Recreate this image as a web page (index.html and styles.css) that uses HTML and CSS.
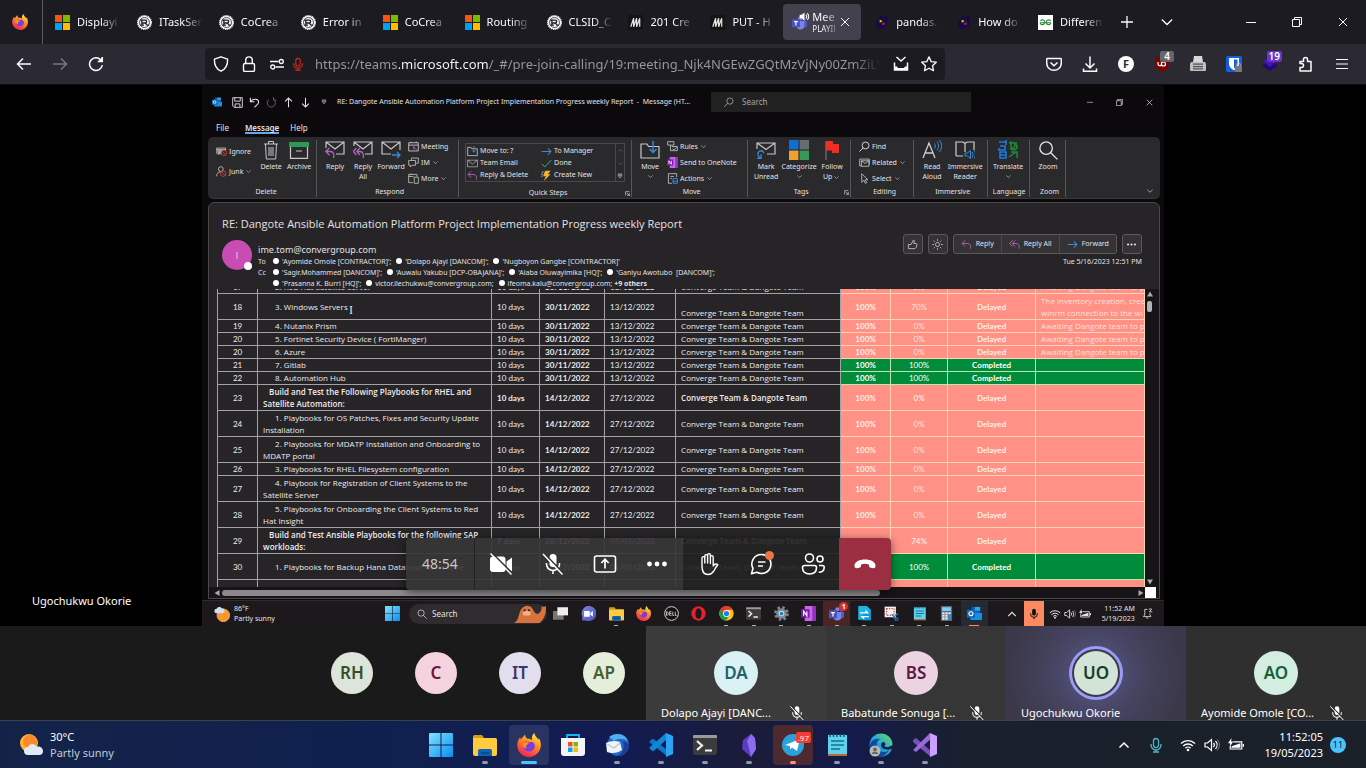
FILE: index.html
```html
<!DOCTYPE html>
<html lang="en">
<head>
<meta charset="utf-8">
<title>Meeting</title>
<link rel="stylesheet" href="styles.css">
</head>
<body>
<svg class="sprite" aria-hidden="true">
  <defs>
    <linearGradient id="g-fox" x1="0.8" y1="0" x2="0.3" y2="1"><stop offset="0" stop-color="#fff04a"/><stop offset=".45" stop-color="#ff8a1e"/><stop offset="1" stop-color="#f0205a"/></linearGradient>
    <linearGradient id="g-win" x1="0" y1="0" x2="1" y2="1"><stop offset="0" stop-color="#7fe4ff"/><stop offset="1" stop-color="#0a8cf0"/></linearGradient>
    <linearGradient id="g-edge" x1="0" y1="1" x2="1" y2="0"><stop offset="0" stop-color="#0b58b4"/><stop offset=".5" stop-color="#25a8dc"/><stop offset="1" stop-color="#6fe04a"/></linearGradient>
    <linearGradient id="g-cam" x1="0" y1="0" x2="1" y2="1"><stop offset="0" stop-color="#7f86e6"/><stop offset="1" stop-color="#4b50b8"/></linearGradient>
  </defs>
  <symbol id="firefox" viewBox="0 0 16 16"><path fill="url(#g-fox)" d="M8 16A7.8 7.8 0 0 1 .2 8.6C.1 6.300.8 4.200 2.200 2.800c0 .6.1 1 .4 1.400C3.600 3.200 4.800 1.800 5.400 1c0 1.400.6 2.300 1.600 2.900 1.500-.2 2.200.3 3.100 1C9.500 2.900 10.200 1 11.600 0c.2 2 1.500 2.600 2.600 4.300.3-.2.3-.6.3-1C15.500 4.800 16 6.600 15.900 8.400 15.700 12.700 12.300 16 8 16z"/><path fill="#7a3be0" d="M8 12.300a4 4 0 0 1-4.100-4.100C4 6.600 5 5.400 6.600 5.600c.7.1 1 .6 1.800.5.6 0 1-.3 1.500-.3C11.600 6.500 12.200 8 11.800 9.500 11.300 11.300 9.800 12.300 8 12.300z"/><path fill="#ff8f1c" d="M3.600 6.500c1.600-.8 3.400-.4 4.600.4-.9.2-1.200.9-2 1.400-.4.4-.4 1.300.4 1.900-1.900.2-3.300-1.400-3-3.700z"/></symbol>
  <symbol id="ms" viewBox="0 0 15 15"><path fill="#f65314" d="M0 0h7v7H0z"/><path fill="#7cbb00" d="M8 0h7v7H8z"/><path fill="#00a1f1" d="M0 8h7v7H0z"/><path fill="#ffbb00" d="M8 8h7v7H8z"/></symbol>
  <symbol id="rust" viewBox="0 0 16 16"><circle cx="8" cy="8" r="7.300" fill="#f4f4f4" stroke="#f4f4f4" stroke-width="1.400" stroke-dasharray="1.200 .8"/><circle cx="8" cy="8" r="5.300" fill="none" stroke="#1c1b22" stroke-width=".8"/><path d="M3.500 10.800h4M5.200 10.500V5.500h3.600a1.500 1.500 0 0 1 0 3H5.500M8.500 8.500c1.500 0 1 2.300 2.300 2.300h2M3.500 5.500h3" fill="none" stroke="#1c1b22" stroke-width="1.400"/></symbol>
  <symbol id="mdn" viewBox="0 0 16 16"><path fill="#141414" d="M0 0h16v16H0z"/><path d="M3 12.500 6 3.500v9l3.200-9v9l3.300-9" fill="none" stroke="#e8e8e8" stroke-width="1.300"/><path d="M12.500 4v8.500" stroke="#e8e8e8" stroke-width="1.300"/></symbol>
  <symbol id="pandas" viewBox="0 0 16 16"><path fill="#150458" d="M3 5h2v9H3zM6 1h2v3H6zM6 9h2v6H6zM9 2h2v3H9zM9 11h2v3H9zM12 1h2v11h-2z"/><path fill="#ffca00" d="M6 5.500h2.200v2.200H6z"/><path fill="#e70488" d="M9 8.300h2.200v2.200H9z"/></symbol>
  <symbol id="gfg" viewBox="0 0 16 16"><path fill="#fff" d="M0 0h16v16H0z"/><path d="M2 8.300h12M2.500 6.300C4 4.500 7 5 7.200 7.500c.1 3.500-4.700 3.700-4.900.8M13.500 6.300C12 4.500 9 5 8.800 7.500c-.1 3.500 4.700 3.700 4.900.8" fill="none" stroke="#2f8d46" stroke-width="1.200"/></symbol>
  <symbol id="teams" viewBox="0 0 16 16"><circle cx="9" cy="3.500" r="2.300" fill="#7b83eb"/><circle cx="13.300" cy="4.500" r="1.600" fill="#5059c9"/><path fill="#5059c9" d="M11 6.500h5V11a3 3 0 0 1-4 2z"/><path fill="#7b83eb" d="M5 6.500h8V11a4 4 0 0 1-8 1z"/><path fill="#4b53bc" d="M0 4.500h8.500V13H0z"/><path d="M2.200 7h4M4.200 7v4.300" stroke="#fff" stroke-width="1.200"/></symbol>
  <symbol id="sound" viewBox="0 0 16 16"><path fill="currentColor" d="M1 5.500h2.800L8 2v12l-4.200-3.500H1z"/><path d="M10 5.200a4 4 0 0 1 0 5.600M12 3a7 7 0 0 1 0 10" fill="none" stroke="currentColor" stroke-width="1.500"/></symbol>
  <symbol id="x" viewBox="0 0 10 10"><path d="m1 1 8 8M9 1 1 9" stroke="currentColor" fill="none"/></symbol>
  <symbol id="plus" viewBox="0 0 12 12"><path d="M6 0v12M0 6h12" stroke="currentColor" stroke-width="1.300"/></symbol>
  <symbol id="chev" viewBox="0 0 12 12"><path d="m.8 3.500 5.200 5 5.200-5" fill="none" stroke="currentColor" stroke-width="1.300"/></symbol>
  <symbol id="chevup" viewBox="0 0 12 12"><path d="m1.500 8.500 4.500-4.500 4.500 4.500" fill="none" stroke="currentColor" stroke-width="1.500"/></symbol>
  <symbol id="min" viewBox="0 0 10 10"><path d="M0 5.500h10" stroke="currentColor"/></symbol>
  <symbol id="restore" viewBox="0 0 10 10"><path d="M.5 2.500h7v7h-7zM2.500 2.500v-2h7v7h-2" fill="none" stroke="currentColor"/></symbol>
  <symbol id="back" viewBox="0 0 16 16"><path d="M15 8H1.500M7 2.500 1.500 8 7 13.500" fill="none" stroke="currentColor" stroke-width="1.500"/></symbol>
  <symbol id="fwd" viewBox="0 0 16 16"><path d="M1 8h13.500M9 2.500 14.500 8 9 13.500" fill="none" stroke="currentColor" stroke-width="1.500"/></symbol>
  <symbol id="reload" viewBox="0 0 16 16"><path d="M14.300 9A6.400 6.400 0 1 1 12.700 3.800L14 5.200M14.300 1v4.500H9.800" fill="none" stroke="currentColor" stroke-width="1.500"/><path d="M14.500 1v4.700H9.800z" fill="currentColor"/></symbol>
  <symbol id="shield" viewBox="0 0 16 16"><path d="M8 .8 14.600 3.200c.2 5.800-1.800 9.800-6.600 12-4.800-2.200-6.800-6.200-6.600-12z" fill="none" stroke="currentColor" stroke-width="1.400" stroke-linejoin="round"/></symbol>
  <symbol id="lock" viewBox="0 0 16 16"><rect x="2.500" y="7.500" width="11" height="8" rx="1.500" fill="none" stroke="currentColor" stroke-width="1.400"/><path d="M4.700 7.500V4.200a3.300 3.300 0 0 1 6.600 0v3.300" fill="none" stroke="currentColor" stroke-width="1.400"/></symbol>
  <symbol id="perm" viewBox="0 0 16 16"><path d="M1 5.500h8.500M6.500 11H15" stroke="currentColor" stroke-width="1.400"/><circle cx="12.300" cy="5.500" r="2" fill="none" stroke="currentColor" stroke-width="1.300"/><circle cx="3.700" cy="11" r="2" fill="none" stroke="currentColor" stroke-width="1.300"/></symbol>
  <symbol id="mic" viewBox="0 0 16 16"><path d="M5.500 4a2.500 2.500 0 0 1 5 0v4a2.500 2.500 0 0 1-5 0zM3 7v1a5 5 0 0 0 10 0V7M8 13v2.500M5 15h6" fill="none" stroke="currentColor" stroke-width="1.300"/></symbol>
  <symbol id="micfill" viewBox="0 0 16 16"><rect x="5.500" y="1" width="5" height="9" rx="2.500" fill="currentColor"/><path d="M3.500 7v1a4.500 4.500 0 0 0 9 0V7M8 12.500V15" fill="none" stroke="currentColor" stroke-width="1.300"/></symbol>
  <symbol id="micoff" viewBox="0 0 24 24"><rect x="8.500" y="2" width="7" height="13" rx="3.500" fill="currentColor"/><path d="M5.500 11v1a6.500 6.500 0 0 0 13 0v-1M12 18.500V22" fill="none" stroke="currentColor" stroke-width="1.600"/><path d="m3.300 1.300 19 20" stroke="#333" stroke-width="1.600"/><path d="m2 2 19.500 20.500" stroke="currentColor" stroke-width="1.500"/></symbol>
  <symbol id="camoff" viewBox="0 0 24 24"><rect x="1" y="4.500" width="15.500" height="15.500" rx="3" fill="currentColor"/><path fill="currentColor" d="m17.500 9.500 5.500-4v14l-5.500-4z"/><path d="m3.300 1.300 20 20" stroke="#333" stroke-width="1.600"/><path d="m1.500 1.500 21 21" stroke="currentColor" stroke-width="1.500"/></symbol>
  <symbol id="share" viewBox="0 0 24 24"><rect x="1.500" y="4" width="21" height="16" rx="2" fill="none" stroke="currentColor" stroke-width="1.600"/><path d="M12 16.500v-9M8.300 11 12 7.300l3.700 3.700" fill="none" stroke="currentColor" stroke-width="1.700"/></symbol>
  <symbol id="dots" viewBox="0 0 24 24"><g fill="currentColor"><circle cx="4.500" cy="12" r="2.400"/><circle cx="12" cy="12" r="2.400"/><circle cx="19.500" cy="12" r="2.400"/></g></symbol>
  <symbol id="hand" viewBox="0 0 24 24"><path d="M5 14V6a1.400 1.400 0 0 1 2.800 0V11 4a1.400 1.400 0 0 1 2.800 0V11 3a1.400 1.400 0 0 1 2.800 0v8.500V5a1.400 1.400 0 0 1 2.800 0v9c1-1.800 2.500-2.500 4.300-1.700.4.300.3.700 0 1.100-1.500 1.300-2.500 3.600-3.800 5.800-1.200 2-3 3.300-5.500 3.300C6.700 22.500 5 20 5 14z" fill="none" stroke="currentColor" stroke-width="1.400" stroke-linejoin="round"/></symbol>
  <symbol id="chat" viewBox="0 0 24 24"><path d="M12.500 2.500a9.500 9.500 0 1 1-4.700 17.800L2.500 21.800 4 16.500A9.500 9.500 0 0 1 12.500 2.500zM9 10h7.500M9 14h5" fill="none" stroke="currentColor" stroke-width="1.600" stroke-linejoin="round"/></symbol>
  <symbol id="people" viewBox="0 0 24 24"><g fill="none" stroke="currentColor" stroke-width="1.600"><circle cx="8.500" cy="6" r="4"/><circle cx="19" cy="7" r="3"/><path d="M1.500 15.500c0-1 .8-2 2-2h10c1.200 0 2 1 2 2 0 4-2.500 6.500-7 6.500s-7-2.500-7-6.500zM18 13.500h3.500c1 0 1.700.8 1.700 1.700 0 3-2 5-5.500 5"/></g></symbol>
  <symbol id="hang" viewBox="0 0 24 24"><path fill="currentColor" d="M12 7.500c5.500 0 10.500 2 10.500 6.200 0 1.700-.8 2.700-2 2.500l-2.800-.5c-1-.2-1.500-.7-1.600-1.500l-.2-1.800c-2.500-.8-5.300-.8-7.800 0L7.900 14.200c-.1.800-.6 1.300-1.600 1.500l-2.800.5c-1.200.2-2-.8-2-2.500C1.500 9.500 6.500 7.500 12 7.500z"/></symbol>
  <symbol id="savepage" viewBox="0 0 16 16"><path d="M1.500 6.500v7.300h13V6.500M3.500 1 8 5l4.500-4" fill="none" stroke="currentColor" stroke-width="1.500"/><path fill="currentColor" d="M1 10.500h3L5 12h6l1-1.500h3v4H1z"/></symbol>
  <symbol id="star" viewBox="0 0 16 16"><path d="m8 .9 2.200 4.700 5.100.6-3.800 3.500 1 5L8 12.200l-4.500 2.500 1-5L.7 6.200l5.100-.6z" fill="none" stroke="currentColor" stroke-width="1.300" stroke-linejoin="round"/></symbol>
  <symbol id="pocket" viewBox="0 0 16 16"><path d="M1.500 2.500h13c.5 0 .8.300.8.800V7a7.300 7.300 0 0 1-14.600 0V3.300c0-.5.300-.8.8-.8zM4.500 6.500 8 9.800l3.500-3.300" fill="none" stroke="currentColor" stroke-width="1.500"/></symbol>
  <symbol id="dl" viewBox="0 0 16 16"><path d="M8 .5v11M3.500 7.500 8 12l4.500-4.500M1.500 12.500v2.700h13v-2.700" fill="none" stroke="currentColor" stroke-width="1.500"/></symbol>
  <symbol id="ublock" viewBox="0 0 16 16"><path fill="#800000" d="M8 0c2 1.500 4.500 2 7 2v6c0 4-3.500 6.500-7 8-3.500-1.500-7-4-7-8V2c2.500 0 5-.5 7-2z"/><path d="M4 6v2a1.700 1.700 0 0 0 3.500 0V6m0 2a2 2 0 1 0 4 0 2 2 0 0 0-4 0" fill="none" stroke="#fff" stroke-width="1.200"/></symbol>
  <symbol id="printer" viewBox="0 0 16 16"><path fill="#d8d8d8" d="M4 0h8l1 6H3z"/><path fill="#bfbfbf" d="M1 6h14l1 2v6a1 1 0 0 1-1 1H1a1 1 0 0 1-1-1V8z"/><path fill="#555" d="M3 7.500h10v1.300H3zM3 10h10v1.200H3zM3 12.300h10v1.200H3z"/></symbol>
  <symbol id="bitw" viewBox="0 0 16 16"><rect width="16" height="16" rx="1.500" fill="#175ddc"/><path fill="#fff" d="M3 2h10v6c0 3-2.500 5-5 6.200C5.500 13 3 11 3 8z"/><path fill="#175ddc" d="M8 3.500h3.500V8c0 2-1.500 3.300-3.500 4.500z"/><path fill="#777" d="M9 10h7v6H9z"/><path d="M10.700 10V8.500a1.800 1.800 0 0 1 3.600 0V10" fill="none" stroke="#aaa"/></symbol>
  <symbol id="layers" viewBox="0 0 18 16"><path fill="#1f0a78" d="m9 5 9 5-9 6-9-6z"/><path fill="#4a12b8" d="m9 0 8 5-8 6-8-6z"/></symbol>
  <symbol id="puzzle" viewBox="0 0 16 16"><path d="M2 5.500h3.500v-2a2 2 0 1 1 4 0v2H13v9.500H2v-3.500h1.500a2 2 0 1 0 0-4H2z" fill="none" stroke="currentColor" stroke-width="1.500" stroke-linejoin="round"/></symbol>
  <symbol id="burger" viewBox="0 0 12 12"><path d="M0 1.500h12M0 6h12M0 10.500h12" stroke="currentColor" stroke-width="1.200"/></symbol>
  <symbol id="outlook" viewBox="0 0 16 16"><path fill="#0a5fb4" d="M5 1h9v7H5z"/><path fill="#28a8ea" d="M8.500 1H14v4H8.500z"/><path fill="#1490df" d="M3.500 7 16 7.500V14a1 1 0 0 1-1 1H4.500a1 1 0 0 1-1-1z"/><path fill="#0f6cbd" d="M0 4h8.500v8.500H0z"/><circle cx="4.200" cy="8.200" r="2.100" fill="none" stroke="#fff" stroke-width="1.200"/></symbol>
  <symbol id="save" viewBox="0 0 16 16"><path d="M1 1h14v14H3l-2-2zM4 1v5h8V1M4.500 15v-5h7v5" fill="none" stroke="currentColor" stroke-width="1.300"/></symbol>
  <symbol id="undo" viewBox="0 0 16 16"><path d="M2 1v6h6M2.500 6.500C6 1.500 14 2.500 14 7.500c0 3-4 5-6 7.500" fill="none" stroke="currentColor" stroke-width="1.500"/></symbol>
  <symbol id="redo" viewBox="0 0 16 16"><path d="M11 3.500A6 6 0 1 1 4.500 3.500M11 0v4.500h4" fill="none" stroke="currentColor" stroke-width="1.400"/></symbol>
  <symbol id="up" viewBox="0 0 16 16"><path d="M8 15V1.500M3 6.500l5-5 5 5" fill="none" stroke="currentColor" stroke-width="1.500"/></symbol>
  <symbol id="down" viewBox="0 0 16 16"><path d="M8 1v13.500M3 9.500l5 5 5-5" fill="none" stroke="currentColor" stroke-width="1.500"/></symbol>
  <symbol id="qat" viewBox="0 0 8 8"><path d="M1 1.500h6" stroke="currentColor"/><path d="m1.500 3.500 2.500 3 2.500-3z" fill="none" stroke="currentColor" stroke-width=".8"/></symbol>
  <symbol id="mag" viewBox="0 0 16 16"><circle cx="6.500" cy="6.500" r="5" fill="none" stroke="currentColor" stroke-width="1.100"/><path d="m10 10 5.500 5.500" stroke="currentColor" stroke-width="1.100"/></symbol>
  <symbol id="magl" viewBox="0 0 16 16"><circle cx="9.500" cy="6.500" r="5" fill="none" stroke="currentColor" stroke-width="1.300"/><path d="M6 10 .5 15.500" stroke="currentColor" stroke-width="1.300"/></symbol>
  <symbol id="ignore" viewBox="0 0 16 14"><path d="M1 10V2h13v4M1 4h13M3 12V4" fill="none" stroke="#c8c8c8" stroke-width="1.200"/><path fill="#aaa" d="M3 5h8v6H3z"/><circle cx="11.500" cy="9" r="3.800" fill="#2a292b" stroke="#d8403f" stroke-width="1.300"/><path d="m9 6.500 5 5" stroke="#d8403f" stroke-width="1.300"/></symbol>
  <symbol id="junk" viewBox="0 0 16 16"><circle cx="7" cy="4.500" r="3.500" fill="none" stroke="#c8c8c8" stroke-width="1.200"/><path d="M1 15c0-4 2-6 5-6.500" fill="none" stroke="#c8c8c8" stroke-width="1.200"/><circle cx="10.500" cy="11" r="4" fill="none" stroke="#d8403f" stroke-width="1.300"/><path d="m7.700 8.200 5.600 5.600" stroke="#d8403f" stroke-width="1.300"/></symbol>
  <symbol id="bin" viewBox="0 0 16 20"><path d="M1 4h14M5.500 4V1.500h5V4M2.500 4l.8 15h9.400l.8-15M6 7v9M8 7v9M10 7v9" fill="none" stroke="#c8c8c8"/></symbol>
  <symbol id="archive" viewBox="0 0 20 18"><path fill="#2b9a52" d="M0 1h20v5H0z"/><path d="M1.500 6v11.300h17V6M7 10h6" fill="none" stroke="#c8c8c8" stroke-width="1.200"/></symbol>
  <symbol id="env" viewBox="0 0 20 14"><path d="M1 1h18v12H1zl9 7 9-7" fill="none" stroke="#c8c8c8" stroke-width="1.200"/></symbol>
  <symbol id="envreply" viewBox="0 0 20 18"><path d="M1 7V1h18v12H11M1 1l9 7 9-7" fill="none" stroke="#c8c8c8" stroke-width="1.200"/><path d="M4.500 7 .8 10.500l3.700 3.800M1 10.500h4.500c3 0 4 3 3 6.500" fill="none" stroke="#b264bd" stroke-width="1.300"/></symbol>
  <symbol id="envall" viewBox="0 0 20 18"><path d="M1 5V1h18v12h-7M1 1l9 7 9-7" fill="none" stroke="#c8c8c8" stroke-width="1.200"/><path d="M3.500 7 .3 10.500l3.200 3.500M7 7l-3.200 3.500L7 14m-3-3.500h3c3 0 4 3 3 6.500" fill="none" stroke="#b264bd" stroke-width="1.300"/></symbol>
  <symbol id="envfwd" viewBox="0 0 20 18"><path d="M19 9V1H1v12h9M1 1l9 7 9-7" fill="none" stroke="#c8c8c8" stroke-width="1.200"/><path d="M11 14h8M16 11l3 3-3 3" fill="none" stroke="#3a8ad8" stroke-width="1.300"/></symbol>
  <symbol id="cal" viewBox="0 0 16 16"><path d="M1 2.500h14v12H1zM1 6h14M4 1v2M12 1v2" fill="none" stroke="#c8c8c8" stroke-width="1.300"/><path d="M12.500 14c0-3-1.500-4-5-4M9.500 7.500 7 10l2.500 2.500" fill="none" stroke="#b264bd" stroke-width="1.300"/></symbol>
  <symbol id="im" viewBox="0 0 16 16"><path d="M5 4V1.500h10V9h-3M1 5h10v7H6l-2.500 2.500V12H1z" fill="none" stroke="#c8c8c8" stroke-width="1.200"/></symbol>
  <symbol id="more" viewBox="0 0 16 16"><path d="M7 14H1V2h12v3M1 5h7M4 1v2M9 6h6v9H9z" fill="none" stroke="#c8c8c8" stroke-width="1.200"/></symbol>
  <symbol id="moveto" viewBox="0 0 16 16"><path d="M1 14V2h5l1 2h8v10z" fill="none" stroke="#c8c8c8" stroke-width="1.200"/><path d="M10 0v9M7.500 6.500 10 9l2.500-2.500" fill="none" stroke="#3a8ad8" stroke-width="1.400"/></symbol>
  <symbol id="arrr" viewBox="0 0 16 12"><path d="M1 6h14M10 1.500 14.500 6 10 10.500" fill="none" stroke="#3a8ad8" stroke-width="1.500"/></symbol>
  <symbol id="check" viewBox="0 0 16 12"><path d="m1 6.500 4.500 4.500L15 1" fill="none" stroke="#4fb07a" stroke-width="1.400"/></symbol>
  <symbol id="replyic" viewBox="0 0 16 14"><path d="M6 1 1.500 5.500 6 10M2 5.500h7c4.500 0 5.500 3.500 4.500 7.500" fill="none" stroke="#b264bd" stroke-width="1.400"/></symbol>
  <symbol id="replyall" viewBox="0 0 16 14"><path d="M5 1 .8 5.500 5 10M9 1 4.800 5.500 9 10M5 5.500h5c4.500 0 5.500 3.500 4.500 7.500" fill="none" stroke="#b264bd" stroke-width="1.400"/></symbol>
  <symbol id="bolt" viewBox="0 0 16 16"><path fill="#f2b233" d="M6 1h8l-4 5h4L4 16l3-7H3z"/><path d="M1 3h3M0 6h3M0 9h2" stroke="#ddd"/></symbol>
  <symbol id="folder" viewBox="0 0 20 18"><path d="M1 17V3h6l1.500 2.500H19V17z" fill="none" stroke="#c8c8c8" stroke-width="1.200"/><path d="M13 0v11M9.500 8l3.500 3.500L16.500 8" fill="none" stroke="#3a8ad8" stroke-width="1.400"/></symbol>
  <symbol id="rules" viewBox="0 0 16 16"><path d="M1 1h9v5H1zM5 6v8h10V8H7M8 11l2 2 4-4" fill="none" stroke="#c8c8c8" stroke-width="1.200"/></symbol>
  <symbol id="onenote" viewBox="0 0 16 16"><path fill="#ca64ea" d="M4 0h12v16H4z"/><path fill="#9332bf" d="M12 0h4v16h-4z"/><path fill="#7719aa" d="M0 3.500h9v9H0z"/><path d="M2.800 10.500v-5l3.500 5v-5" fill="none" stroke="#fff" stroke-width="1.200"/></symbol>
  <symbol id="actions" viewBox="0 0 16 16"><path d="M2 15V1h12v5M5 5h5M5 8h2M2 15h5" fill="none" stroke="#c8c8c8" stroke-width="1.200"/><path d="M9 8h6v7H9zM8 12h7" fill="none" stroke="#3a8ad8" stroke-width="1.400"/></symbol>
  <symbol id="unread" viewBox="0 0 20 18"><path d="M1 8V2h18v11h-8M1 2l9 6.500L19 2" fill="none" stroke="#c8c8c8" stroke-width="1.200"/><path d="M8 12c-1-3-5-3-6 0-.5 2 0 3 2 5M1 17.300h4v-4" fill="none" stroke="#3a8ad8" stroke-width="1.300"/></symbol>
  <symbol id="cats" viewBox="0 0 18 18"><path fill="#0f6fd0" d="M0 0h8.500v8.500H0z"/><path fill="#666c72" d="M9.500 0H18v8.500H9.500z"/><path fill="#f0a030" d="M0 9.500h8.500V18H0z"/><path fill="#38985a" d="M9.500 9.500H18V18H9.500z"/></symbol>
  <symbol id="flag" viewBox="0 0 16 20"><path d="M2 1v19" stroke="#888"/><path fill="#ee2f24" d="M2 1h7v3h6v9H8v-2.500H2z"/></symbol>
  <symbol id="related" viewBox="0 0 16 16"><path d="M3 13H1V3h14v8M3.500 5.500h11v8h-11zl5.500 4 5.500-4" fill="none" stroke="#c8c8c8" stroke-width="1.200"/></symbol>
  <symbol id="cursor" viewBox="0 0 16 16"><path d="M4 1v12.500l3.200-3 2 4.500 2-1-2-4.200H13z" fill="none" stroke="#c8c8c8" stroke-width="1.200"/></symbol>
  <symbol id="aloud" viewBox="0 0 20 20"><path d="M1 18 7 3l6 15M3 13h8" fill="none" stroke="#d0d0d0" stroke-width="1.300"/><path d="M12.500 3.500a4 4 0 0 1 0 5M15 1.500a7 7 0 0 1 0 9M17.500 0a10 10 0 0 1 0 12" fill="none" stroke="#3a8ad8"/></symbol>
  <symbol id="reader" viewBox="0 0 20 20"><path d="M10 3v9M1 16V2h7l2 1.500L12 2h7v8M1 16h7" fill="none" stroke="#d0d0d0" stroke-width="1.200"/><path d="M10 13h2.500l3-2.500v8L12.500 16H10zM17 12a4 4 0 0 1 0 5.500M19 10.500a6 6 0 0 1 0 8" fill="none" stroke="#3a8ad8"/></symbol>
  <symbol id="translate" viewBox="0 0 20 20"><path d="M1 2h7M2 6h5v4H1V8M8 0v5M2 12h6v6H2zM2 15h6" fill="none" stroke="#1f7ae0" stroke-width="1.600"/><path d="M11 3h8M13 1v6a3 3 0 1 0 4-3c0 3-2 5-5 5M11 17l7-5M13 12h6v6" fill="none" stroke="#1f8a35" stroke-width="1.500"/></symbol>
  <symbol id="launch" viewBox="0 0 8 8"><path d="M1 7V1h6M3 3l4 4M7 3.500V7H3.500" fill="none" stroke="currentColor"/></symbol>
  <symbol id="thumb" viewBox="0 0 16 16"><path d="M2 8v6h9.500l2-2 1-4.500-1-1H10L10.500 2H9L6 8z" fill="none" stroke="#ccc" stroke-width="1.200"/></symbol>
  <symbol id="sun" viewBox="0 0 16 16"><circle cx="8" cy="8" r="3" fill="none" stroke="#ccc" stroke-width="1.200"/><path d="M8 0v3M8 13v3M0 8h3M13 8h3M2.300 2.300l2 2M11.700 11.700l2 2M2.300 13.700l2-2M11.700 4.300l2-2" stroke="#ccc"/></symbol>
  <symbol id="tri" viewBox="0 0 8 8"><path d="m4 1.500 3 5H1z" fill="#aaa"/></symbol>
  <symbol id="weather" viewBox="0 0 24 24"><circle cx="10" cy="10" r="9" fill="#ffb52e"/><circle cx="11" cy="9" r="7" fill="#f98a2c"/><path fill="#dfe9f7" d="M9 22a4 4 0 0 1 0-8c1.500-3.500 6.500-4 8.500-.5C21.500 13 24 15 24 18a4 4 0 0 1-4 4z"/></symbol>
  <symbol id="weather2" viewBox="0 0 24 24"><circle cx="14" cy="14" r="9.500" fill="#f9962c"/><circle cx="14" cy="14" r="9.500" fill="none" stroke="#ffc04a" stroke-width="1"/><path fill="#cfe0f5" d="M4 11a3.500 3.500 0 0 1 0-7C5.500 1 10 .8 11.500 3.500 14 3 16 5 16 7.500A3.500 3.500 0 0 1 12.500 11z"/></symbol>
  <symbol id="win" viewBox="0 0 24 24"><path fill="url(#g-win)" d="M0 1a1 1 0 0 1 1-1h10.500v11.500H0zM12.500 0H23a1 1 0 0 1 1 1v10.500H12.500zM0 12.500h11.500V24H1a1 1 0 0 1-1-1zM12.500 12.500H24V23a1 1 0 0 1-1 1H12.500z"/></symbol>
  <symbol id="files" viewBox="0 0 24 24"><path fill="#d79b14" d="M0 3.500A1.500 1.500 0 0 1 1.500 2H9l2 3H0z"/><path fill="#fecb3e" d="M0 5h22.500A1.500 1.500 0 0 1 24 6.500V21a2 2 0 0 1-2 2H2a2 2 0 0 1-2-2z"/><path fill="#0a64b8" d="M5 23v-5a2 2 0 0 1 2-2h10a2 2 0 0 1 2 2v5z"/><path fill="#0a4a8c" d="M8 19h8v2H8z"/></symbol>
  <symbol id="store" viewBox="0 0 24 24"><path d="M6 6V2h12v4" fill="none" stroke="#1cb2f0" stroke-width="1.800"/><path fill="#f4f4f4" d="M0 5h24v15a3 3 0 0 1-3 3H3a3 3 0 0 1-3-3z"/><path fill="#f25022" d="M7 9h4.500v4.500H7z"/><path fill="#7fba00" d="M12.500 9H17v4.500h-4.500z"/><path fill="#00a4ef" d="M7 14.500h4.500V19H7z"/><path fill="#ffb900" d="M12.500 14.500H17V19h-4.500z"/></symbol>
  <symbol id="tbird" viewBox="0 0 24 24"><circle cx="13" cy="12" r="11" fill="#2368c4"/><path fill="#4fb0f0" d="M4 4c6-5 16-4 19 4-5-3-10-3-14 0z"/><path fill="#183f98" d="M24 11c0 7-5 12-12 12 6-3 8-8 6-15z"/><path fill="#f2f4f8" d="M1 10c4-2 9-3 14-1l2 8c-4 3-10 4-15 2z"/><path d="m2 11 7 4 6-5" fill="none" stroke="#b8c4d8" stroke-width="1.200"/></symbol>
  <symbol id="vscode" viewBox="0 0 24 24"><path fill="#0a78c8" d="m2 7 2-1.500L18 17v6L0 9z"/><path fill="#1187d6" d="m0 15 17-15v7L4 18.500z"/><path fill="#2aa5f5" d="m17 0 7 3v18l-7 3z"/></symbol>
  <symbol id="term" viewBox="0 0 24 24"><path fill="#3c3c3c" d="M0 5h24v15a2 2 0 0 1-2 2H2a2 2 0 0 1-2-2z"/><path fill="#9a9a9a" d="M0 3a1 1 0 0 1 1-1h22a1 1 0 0 1 1 1v2H0z"/><path d="m4 8 5 4.500L4 17M12 17.500h7" fill="none" stroke="#f0f0f0" stroke-width="2.200"/></symbol>
  <symbol id="obsid" viewBox="0 0 24 24"><path fill="#5c3cc0" d="M14 1 6 7l-1 9 9 8 5-8-1-11z"/><path fill="#8e6cf0" d="M14 1 10 8l2 7 2 9 5-8-1-11z"/></symbol>
  <symbol id="tgram" viewBox="0 0 24 24"><circle cx="12" cy="12" r="11" fill="#2aa1da"/><path fill="#fff" d="M4 12 19 6l-3 12-5-3.500-2 2V13z"/></symbol>
  <symbol id="notes" viewBox="0 0 24 24"><path fill="#5fd2ee" d="M3 2h19v20H3z"/><path fill="#b86a30" d="M3 21h19v2H3z"/><path d="M5 1v3M8.500 1v3M12 1v3M15.500 1v3M19 1v3" stroke="#14607a" stroke-width="1.500"/><path d="M6 8h13M6 12h13M6 16h9" stroke="#14738f" stroke-width="1.600"/></symbol>
  <symbol id="edge" viewBox="0 0 24 24"><circle cx="12" cy="12" r="11.500" fill="url(#g-edge)"/><path fill="#0c4a9c" d="M1 14c0-6 5-9 10-8-5 3-4 9 0 12 3 2 7 1 9-1-3 6-9 8-14 5-3-2-5-4-5-8z"/><path fill="#14204c" d="M12 12c0-3 3-4 4-2 1 1 0 3-1 3 2 2 5 1 9-1v3c-3 3-12 2-12-3z"/><circle cx="6" cy="18" r="5.500" fill="#b9b9b9"/><circle cx="6" cy="16.500" r="2" fill="#666"/><path fill="#666" d="M2.500 21c1-3 6-3 7 0z"/></symbol>
  <symbol id="vs" viewBox="0 0 24 24"><path fill="#7a4fc0" d="M0 7 3 5l15 13v6L0 9z"/><path fill="#9a68dc" d="m0 17 17-17 2 5L3 19z"/><path fill="#c9a0ff" d="m17 0 7 3v18l-7 3z"/></symbol>
  <symbol id="wifi" viewBox="0 0 16 16"><path d="M1 6.500a10 10 0 0 1 14 0M3.200 9a6.800 6.800 0 0 1 9.600 0M5.400 11.200a3.700 3.700 0 0 1 5.200 0" fill="none" stroke="currentColor" stroke-width="1.300"/><circle cx="8" cy="13" r="1.300" fill="currentColor"/></symbol>
  <symbol id="vol" viewBox="0 0 16 16"><path d="M1 6h2.500L7.500 2.500v11L3.500 10H1z" fill="none" stroke="currentColor" stroke-width="1.200"/><path d="M9.500 6a3 3 0 0 1 0 4M11.500 4a6 6 0 0 1 0 8" fill="none" stroke="currentColor" stroke-width="1.200"/><path d="M13.300 2.500a8 8 0 0 1 0 11" fill="none" stroke="#777"/></symbol>
  <symbol id="batt" viewBox="0 0 18 16"><path d="M6 4.500h9.500v8h-13V9" fill="none" stroke="currentColor" stroke-width="1.300"/><path fill="currentColor" d="M16.500 7H18v3h-1.500zM4 11V9.500L14 6v5zM4 0 0 6h2.500L2 10l4-6H3.500z"/></symbol>
  <symbol id="bell" viewBox="0 0 16 16"><path d="M8 2H4v8l-2 2.500h11L11.500 10V8M6 14.500h3M10 1.500h4l-3.500 4H15" fill="none" stroke="currentColor" stroke-width="1.200"/></symbol>
  <symbol id="task" viewBox="0 0 24 24"><path fill="#777" d="M0 8h17v14H0z"/><path fill="#eee" d="M7 2h17v13H7z"/></symbol>
  <symbol id="meet" viewBox="0 0 24 24"><path fill="url(#g-cam)" d="M12 0a12 12 0 1 1-4 23H2V17A12 12 0 0 1 12 0z"/><path fill="#fff" d="M5 8h9v9H5zM15 11l4-3v9l-4-3z"/></symbol>
  <symbol id="dell" viewBox="0 0 24 24"><circle cx="12" cy="12" r="11" fill="#111" stroke="#ddd" stroke-width="1.500"/><path d="M4 9v6c4 0 4-6 0-6zM12 9H9v6h3M9 12h3M14 9v6h2.500M18 9v6h2.500" fill="none" stroke="#ddd" stroke-width="1.300"/></symbol>
  <symbol id="opera" viewBox="0 0 24 24"><circle cx="12" cy="12" r="11.500" fill="#e8202c"/><ellipse cx="12" cy="12" rx="5" ry="8.500" fill="#1a181b"/></symbol>
  <symbol id="chrome" viewBox="0 0 24 24"><circle cx="12" cy="12" r="11.500" fill="#fbc116"/><path fill="#e33b2e" d="M2 6a11.500 11.500 0 0 1 20 0H12l-5 9z"/><path fill="#219a4a" d="M2 6a11.500 11.500 0 0 0 9 17.500L17 14H8z"/><circle cx="12" cy="12" r="5.500" fill="#fff"/><circle cx="12" cy="12" r="4.200" fill="#2f74e0"/></symbol>
  <symbol id="gear" viewBox="0 0 24 24"><circle cx="12" cy="12" r="8.500" fill="#7c8790"/><circle cx="12" cy="12" r="9.800" fill="none" stroke="#7c8790" stroke-width="4" stroke-dasharray="4 3.700"/><circle cx="12" cy="12" r="4.500" fill="#d8e0e6"/><circle cx="12" cy="12" r="3" fill="#1b80d0"/></symbol>
  <symbol id="skype" viewBox="0 0 24 24"><path fill="#1fb4e8" d="M2 0h14l6 6v16H2z"/><path fill="#0a9ad8" d="M9 9h13v14H9z"/><path d="M5 11h12l-3.500-3.500M19 17H8l3.500 3.500" fill="none" stroke="#fff" stroke-width="2.200"/></symbol>
  <symbol id="snip" viewBox="0 0 24 24"><path fill="#f2f2f2" d="M1 1h18v17H1z"/><path d="M4 4h12v11H4z" fill="none" stroke="#d04038" stroke-width="2" stroke-dasharray="2 2"/><path d="m12 13 8 8M22 12l-8 7" stroke="#2a80d0" stroke-width="2"/><circle cx="20" cy="21" r="2.500" fill="none" stroke="#2a80d0" stroke-width="1.500"/></symbol>
  <symbol id="calc" viewBox="0 0 24 24"><path fill="#5a6670" d="M3 0h18v24H3z"/><path fill="#7fd0f8" d="M5 2h14v6H5z"/><path fill="#e4e8ec" d="M5 10h4v3H5zM10 10h4v3h-4zM15 10h4v3h-4zM5 14h4v3H5zM10 14h4v3h-4zM5 18h4v4H5zM10 18h4v4h-4z"/><path fill="#2a90e0" d="M15 14h4v8h-4z"/></symbol>
  <symbol id="walrus" viewBox="0 0 30 17"><path fill="#d8733c" d="M0 17c4-2 4-7 6-12C8 1 14-1 17 3c2 3 3 6 6 5 2-1 3-3 3-7l2 1 2-1c1 8-3 14-6 16z"/><path fill="#f3b08a" d="M8 7c2-2 6-2 8 0l-1 3H9z"/><circle cx="10" cy="5" r="1" fill="#222"/><circle cx="14" cy="5" r="1" fill="#222"/></symbol>
</svg>

<header class="tabstrip">
  <button class="pinned" aria-label="Firefox View"><svg class="i16"><use href="#firefox"/></svg></button>
  <nav class="tabs">
    <button class="tab"><svg class="i15"><use href="#ms"/></svg><span>Displayi</span></button>
    <button class="tab"><svg class="i15"><use href="#rust"/></svg><span>ITaskSer</span></button>
    <button class="tab"><svg class="i15"><use href="#rust"/></svg><span>CoCrea</span></button>
    <button class="tab"><svg class="i15"><use href="#rust"/></svg><span>Error in</span></button>
    <button class="tab"><svg class="i15"><use href="#ms"/></svg><span>CoCrea</span></button>
    <button class="tab"><svg class="i15"><use href="#ms"/></svg><span>Routing</span></button>
    <button class="tab"><svg class="i15"><use href="#rust"/></svg><span>CLSID_C</span></button>
    <button class="tab"><svg class="i15"><use href="#mdn"/></svg><span>201 Cre</span></button>
    <button class="tab"><svg class="i15"><use href="#mdn"/></svg><span>PUT - H</span></button>
    <button class="tab active"><svg class="i15"><use href="#teams"/></svg><svg class="playing"><use href="#sound"/></svg><span class="two">Meet<small>PLAYIN</small></span><svg class="i10"><use href="#x"/></svg></button>
    <button class="tab"><svg class="i15"><use href="#pandas"/></svg><span>pandas.</span></button>
    <button class="tab"><svg class="i15"><use href="#pandas"/></svg><span>How do</span></button>
    <button class="tab"><svg class="i15"><use href="#gfg"/></svg><span>Differen</span></button>
  </nav>
  <button class="tool" aria-label="New tab"><svg class="i12"><use href="#plus"/></svg></button>
  <button class="tool" aria-label="List tabs"><svg class="i12"><use href="#chev"/></svg></button>
  <div class="wincontrols">
    <button aria-label="Minimize"><svg class="i10"><use href="#min"/></svg></button>
    <button aria-label="Restore"><svg class="i10"><use href="#restore"/></svg></button>
    <button aria-label="Close"><svg class="i10"><use href="#x"/></svg></button>
  </div>
</header>

<div class="navbar">
  <div class="navleft">
    <button aria-label="Back"><svg class="i16"><use href="#back"/></svg></button>
    <button class="dim" aria-label="Forward"><svg class="i16"><use href="#fwd"/></svg></button>
    <button aria-label="Reload"><svg class="i16"><use href="#reload"/></svg></button>
  </div>
  <div class="urlbar">
    <svg class="i16"><use href="#shield"/></svg>
    <svg class="i16"><use href="#lock"/></svg>
    <svg class="i16"><use href="#perm"/></svg>
    <svg class="i14 red"><use href="#mic"/></svg>
    <input class="url" aria-label="Address" value="https://teams.microsoft.com/_#/pre-join-calling/19:meeting_Njk4NGEwZGQtMzVjNy00ZmZiLV">
    <svg class="i16"><use href="#savepage"/></svg>
    <svg class="i16"><use href="#star"/></svg>
  </div>
  <div class="extensions">
    <button aria-label="Pocket"><svg class="i16"><use href="#pocket"/></svg></button>
    <button aria-label="Downloads"><svg class="i16"><use href="#dl"/></svg></button>
    <button aria-label="Account"><span class="account">F</span></button>
    <button aria-label="uBlock"><svg class="i16"><use href="#ublock"/></svg><span class="badge">4</span></button>
    <button aria-label="Print"><svg class="i16"><use href="#printer"/></svg></button>
    <button aria-label="Bitwarden"><svg class="i16"><use href="#bitw"/></svg></button>
    <button aria-label="Layers"><svg class="i16"><use href="#layers"/></svg><span class="badge violet">19</span></button>
    <button aria-label="Extensions"><svg class="i16"><use href="#puzzle"/></svg></button>
    <button aria-label="Menu"><svg class="i12"><use href="#burger"/></svg></button>
  </div>
</div>

<main class="stage">
  <p class="presenter">Ugochukwu Okorie</p>
  <section class="screen">
    <div class="titlebar">
      <svg class="i10"><use href="#outlook"/></svg>
      <svg class="i11"><use href="#save"/></svg>
      <svg class="i11"><use href="#undo"/></svg>
      <svg class="i11 faded"><use href="#redo"/></svg>
      <svg class="i11"><use href="#up"/></svg>
      <svg class="i11"><use href="#down"/></svg>
      <svg class="i6"><use href="#qat"/></svg>
      <span class="wintitle">RE: Dangote Ansible Automation Platform Project Implementation Progress weekly Report &nbsp;-&nbsp; Message (HT...</span>
      <label class="winsearch"><svg class="i10"><use href="#magl"/></svg><input placeholder="Search" aria-label="Search mail"></label>
      <div class="winbtns">
        <svg class="i6"><use href="#min"/></svg>
        <svg class="i7"><use href="#restore"/></svg>
        <svg class="i7"><use href="#x"/></svg>
      </div>
    </div>
    <nav class="menus"><a href="#">File</a><a href="#" class="on">Message</a><a href="#">Help</a></nav>

    <div class="ribbon">
      <div class="group g-delete">
        <div class="body">
          <div class="small wide"><button><svg class="i11"><use href="#ignore"/></svg>Ignore</button><button><svg class="i11"><use href="#junk"/></svg>Junk<svg class="caret"><use href="#chev"/></svg></button></div>
          <button class="big"><svg class="i20"><use href="#bin"/></svg>Delete</button>
          <button class="big"><svg class="i20"><use href="#archive"/></svg>Archive</button>
        </div><p>Delete</p>
      </div>
      <div class="group g-respond">
        <div class="body">
          <button class="big"><svg class="i20"><use href="#envreply"/></svg>Reply</button>
          <button class="big"><svg class="i20"><use href="#envall"/></svg>Reply<br>All</button>
          <button class="big"><svg class="i20"><use href="#envfwd"/></svg>Forward</button>
          <div class="small"><button><svg class="i11"><use href="#cal"/></svg>Meeting</button><button><svg class="i11"><use href="#im"/></svg>IM<svg class="caret"><use href="#chev"/></svg></button><button><svg class="i11"><use href="#more"/></svg>More<svg class="caret"><use href="#chev"/></svg></button></div>
        </div><p>Respond</p>
      </div>
      <div class="group g-quick">
        <div class="quick">
          <div class="steps">
            <button><svg class="i11"><use href="#moveto"/></svg>Move to: ?</button><button><svg class="i11"><use href="#arrr"/></svg>To Manager</button>
            <button><svg class="i11"><use href="#env"/></svg>Team Email</button><button><svg class="i11"><use href="#check"/></svg>Done</button>
            <button><svg class="i11"><use href="#replyic"/></svg>Reply &amp; Delete</button><button><svg class="i11"><use href="#bolt"/></svg>Create New</button>
          </div>
          <div class="spin"><svg class="caret faded"><use href="#chevup"/></svg><svg class="caret faded"><use href="#chev"/></svg><svg class="i6"><use href="#qat"/></svg></div>
        </div><p>Quick Steps<svg class="launch"><use href="#launch"/></svg></p>
      </div>
      <div class="group g-move">
        <div class="body">
          <button class="big"><svg class="i20"><use href="#folder"/></svg>Move<svg class="caret"><use href="#chev"/></svg></button>
          <div class="small"><button><svg class="i11"><use href="#rules"/></svg>Rules<svg class="caret"><use href="#chev"/></svg></button><button><svg class="i11"><use href="#onenote"/></svg>Send to OneNote</button><button><svg class="i11"><use href="#actions"/></svg>Actions<svg class="caret"><use href="#chev"/></svg></button></div>
        </div><p>Move</p>
      </div>
      <div class="group g-tags">
        <div class="body">
          <button class="big"><svg class="i20"><use href="#unread"/></svg>Mark<br>Unread</button>
          <button class="big mid"><svg class="i20"><use href="#cats"/></svg>Categorize<svg class="caret"><use href="#chev"/></svg></button>
          <button class="big"><svg class="i20"><use href="#flag"/></svg>Follow<span>Up<svg class="caret"><use href="#chev"/></svg></span></button>
        </div><p>Tags<svg class="launch"><use href="#launch"/></svg></p>
      </div>
      <div class="group g-edit">
        <div class="body"><div class="small"><button><svg class="i11"><use href="#magl"/></svg>Find</button><button><svg class="i11"><use href="#related"/></svg>Related<svg class="caret"><use href="#chev"/></svg></button><button><svg class="i11"><use href="#cursor"/></svg>Select<svg class="caret"><use href="#chev"/></svg></button></div></div><p>Editing</p>
      </div>
      <div class="group g-immer">
        <div class="body">
          <button class="big"><svg class="i20"><use href="#aloud"/></svg>Read<br>Aloud</button>
          <button class="big mid"><svg class="i20"><use href="#reader"/></svg>Immersive<br>Reader</button>
        </div><p>Immersive</p>
      </div>
      <div class="group g-lang">
        <div class="body"><button class="big mid"><svg class="i20"><use href="#translate"/></svg>Translate<svg class="caret"><use href="#chev"/></svg></button></div><p>Language</p>
      </div>
      <div class="group g-zoom">
        <div class="body"><button class="big"><svg class="i20"><use href="#mag"/></svg>Zoom</button></div><p>Zoom</p>
      </div>
      <div class="collapse"><svg class="i6"><use href="#chev"/></svg></div>
    </div>

    <article class="mail">
      <div class="mailhead">
        <h1>RE: Dangote Ansible Automation Platform Project Implementation Progress weekly Report</h1>
        <div class="meta">
          <div class="sender">I</div>
          <div class="people">
            <p class="from">ime.tom@convergroup.com</p>
            <p><b>To</b><i></i>'Ayomide Omole [CONTRACTOR]'; <i></i>'Dolapo Ajayi [DANCOM]'; <i></i>'Nugboyon Gangbe [CONTRACTOR]'</p>
            <p><b>Cc</b><i></i>'Sagir.Mohammed [DANCOM]'; <i></i>'Auwalu Yakubu [DCP-OBAJANA]'; <i></i>'Alaba Oluwayimika [HQ]'; <i></i>'Ganiyu Awotubo &nbsp;[DANCOM]';</p>
            <p><b></b><i></i>'Prasanna K. Burri [HQ]'; <i></i>victor.ilechukwu@convergroup.com; <i></i>ifeoma.kalu@convergroup.com; <strong>+9 others</strong></p>
          </div>
          <div class="respond">
            <div class="btns">
              <button class="sq" aria-label="Like"><svg class="i11"><use href="#thumb"/></svg></button>
              <button class="sq" aria-label="Brightness"><svg class="i11"><use href="#sun"/></svg></button>
              <div class="trio"><button><svg class="i11"><use href="#replyic"/></svg>Reply</button><button><svg class="i11"><use href="#replyall"/></svg>Reply All</button><button><svg class="i11"><use href="#arrr"/></svg>Forward</button></div>
              <button class="sq" aria-label="More"><svg class="i11"><use href="#dots"/></svg></button>
            </div>
            <time>Tue 5/16/2023 12:51 PM</time>
          </div>
        </div>
      </div>
      <div class="mailbody">
        <div class="sheet">
          <table>
            <colgroup><col class="c-no"><col class="c-task"><col class="c-days"><col class="c-start"><col class="c-end"><col class="c-team"><col class="c-plan"><col class="c-done"><col class="c-status"><col></colgroup>
            <tbody>
              <tr><td>17</td><td>2. Red Hat Satellite Server</td><td>10 days</td><td>30/11/2022</td><td>13/12/2022</td><td>Converge Team &amp; Dangote Team</td><td>100%</td><td>0%</td><td>Delayed</td><td>Awaiting Dangote team to p</td></tr>
              <tr class="tall low"><td>18</td><td>3. Windows Servers</td><td>10 days</td><td>30/11/2022</td><td>13/12/2022</td><td>Converge Team &amp; Dangote Team</td><td>100%</td><td>70%</td><td>Delayed</td><td>The inventory creation, cred<br>winrm connection to the wi</td></tr>
              <tr><td>19</td><td>4. Nutanix Prism</td><td>10 days</td><td>30/11/2022</td><td>13/12/2022</td><td>Converge Team &amp; Dangote Team</td><td>100%</td><td>0%</td><td>Delayed</td><td>Awaiting Dangote team to p</td></tr>
              <tr><td>20</td><td>5. Fortinet Security Device ( FortiManger)</td><td>10 days</td><td>30/11/2022</td><td>13/12/2022</td><td>Converge Team &amp; Dangote Team</td><td>100%</td><td>0%</td><td>Delayed</td><td>Awaiting Dangote team to p</td></tr>
              <tr><td>20</td><td>6. Azure</td><td>10 days</td><td>30/11/2022</td><td>13/12/2022</td><td>Converge Team &amp; Dangote Team</td><td>100%</td><td>0%</td><td>Delayed</td><td>Awaiting Dangote team to p</td></tr>
              <tr class="ok"><td>21</td><td>7. Gitlab</td><td>10 days</td><td>30/11/2022</td><td>13/12/2022</td><td>Converge Team &amp; Dangote Team</td><td>100%</td><td>100%</td><td>Completed</td><td></td></tr>
              <tr class="ok"><td>22</td><td>8. Automation Hub</td><td>10 days</td><td>30/11/2022</td><td>13/12/2022</td><td>Converge Team &amp; Dangote Team</td><td>100%</td><td>100%</td><td>Completed</td><td></td></tr>
              <tr class="tall head"><td>23</td><td>Build and Test the Following Playbooks for RHEL and<br>Satellite Automation:</td><td>10 days</td><td>14/12/2022</td><td>27/12/2022</td><td>Converge Team &amp; Dangote Team</td><td>100%</td><td>0%</td><td>Delayed</td><td></td></tr>
              <tr class="tall"><td>24</td><td>1. Playbooks for OS Patches, Fixes and Security Update<br>Installation</td><td>10 days</td><td>14/12/2022</td><td>27/12/2022</td><td>Converge Team &amp; Dangote Team</td><td>100%</td><td>0%</td><td>Delayed</td><td></td></tr>
              <tr class="tall"><td>25</td><td>2. Playbooks for MDATP Installation and Onboarding to<br>MDATP portal</td><td>10 days</td><td>14/12/2022</td><td>27/12/2022</td><td>Converge Team &amp; Dangote Team</td><td>100%</td><td>0%</td><td>Delayed</td><td></td></tr>
              <tr><td>26</td><td>3. Playbooks for RHEL Filesystem configuration</td><td>10 days</td><td>14/12/2022</td><td>27/12/2022</td><td>Converge Team &amp; Dangote Team</td><td>100%</td><td>0%</td><td>Delayed</td><td></td></tr>
              <tr class="tall"><td>27</td><td>4. Playbook for Registration of Client Systems to the<br>Satellite Server</td><td>10 days</td><td>14/12/2022</td><td>27/12/2022</td><td>Converge Team &amp; Dangote Team</td><td>100%</td><td>0%</td><td>Delayed</td><td></td></tr>
              <tr class="tall"><td>28</td><td>5. Playbooks for Onboarding the Client Systems to Red<br>Hat Insight</td><td>10 days</td><td>14/12/2022</td><td>27/12/2022</td><td>Converge Team &amp; Dangote Team</td><td>100%</td><td>0%</td><td>Delayed</td><td></td></tr>
              <tr class="tall head"><td>29</td><td>Build and Test Ansible Playbooks for the following SAP<br>workloads:</td><td>7 days</td><td>28/12/2022</td><td>05/01/2023</td><td>Converge Team &amp; Dangote Team</td><td>100%</td><td>74%</td><td>Delayed</td><td></td></tr>
              <tr class="tall ok"><td>30</td><td>1. Playbooks for Backup Hana Database on Ansible</td><td>7 days</td><td>28/12/2022</td><td>05/01/2023</td><td>Converge Team, Dangote Team</td><td>100%</td><td>100%</td><td>Completed</td><td></td></tr>
              <tr class="tall"><td></td><td></td><td></td><td></td><td></td><td></td><td></td><td></td><td></td><td></td></tr>
            </tbody>
          </table>
          <span class="ibeam">I</span>
        </div>
        <div class="vscroll"><svg class="i8"><use href="#tri"/></svg><span></span><svg class="i8 flip"><use href="#tri"/></svg></div>
      </div>
      <div class="hscroll"><svg class="i8 left"><use href="#tri"/></svg><span></span><svg class="i8 right"><use href="#tri"/></svg><b></b></div>
    </article>

    <footer class="innerbar">
      <div class="wx"><svg class="i16"><use href="#weather2"/></svg><div>86°F<br>Partly sunny</div></div>
      <svg class="i15 start"><use href="#win"/></svg>
      <label class="pill"><svg class="i10"><use href="#mag"/></svg><input placeholder="Search" aria-label="Search"><svg class="walrus"><use href="#walrus"/></svg></label>
      <div class="apps">
        <span><svg><use href="#task"/></svg></span><span><svg><use href="#meet"/></svg></span><span class="run"><svg><use href="#files"/></svg></span><span><svg><use href="#firefox"/></svg></span><span><svg><use href="#dell"/></svg></span><span><svg><use href="#opera"/></svg></span><span class="run"><svg><use href="#chrome"/></svg></span><span class="run"><svg><use href="#term"/></svg></span><span class="run"><svg><use href="#gear"/></svg></span><span class="run"><svg><use href="#onenote"/></svg></span><span class="run hot"><svg><use href="#teams"/></svg><em>1</em></span><span class="run"><svg><use href="#skype"/></svg></span><span class="run"><svg><use href="#snip"/></svg></span><span class="run"><svg><use href="#notes"/></svg></span><span class="run"><svg><use href="#calc"/></svg></span><span class="run cur"><svg><use href="#outlook"/></svg></span>
      </div>
      <div class="tray">
        <svg class="i10"><use href="#chevup"/></svg>
        <span class="micbox"><svg class="i12"><use href="#micfill"/></svg></span>
        <svg class="i12"><use href="#wifi"/></svg><svg class="i12"><use href="#vol"/></svg><svg class="i12"><use href="#batt"/></svg>
        <time>11:52 AM<br>5/19/2023</time>
        <svg class="i11"><use href="#bell"/></svg>
      </div>
    </footer>
  </section>

  <div class="callbar">
    <span class="timer">48:54</span>
    <div class="part light">
      <button aria-label="Camera"><svg><use href="#camoff"/></svg></button>
      <button aria-label="Microphone"><svg><use href="#micoff"/></svg></button>
      <button aria-label="Share"><svg><use href="#share"/></svg></button>
      <button aria-label="More"><svg><use href="#dots"/></svg></button>
    </div>
    <div class="part dark">
      <button aria-label="Raise hand"><svg><use href="#hand"/></svg></button>
      <button aria-label="Chat"><svg><use href="#chat"/></svg><span class="dot"></span></button>
      <button aria-label="People"><svg><use href="#people"/></svg></button>
    </div>
    <button class="hang" aria-label="Leave"><svg><use href="#hang"/></svg></button>
  </div>
</main>

<section class="roster">
  <div class="others">
    <span class="face f1">RH</span><span class="face f2">C</span><span class="face f3">IT</span><span class="face f4">AP</span>
  </div>
  <div class="tile t1"><span class="face f5">DA</span><p><span>Dolapo Ajayi [DANC...</span><svg class="i16"><use href="#micoff"/></svg></p></div>
  <div class="tile t2"><span class="face f6">BS</span><p><span>Babatunde Sonuga [...</span><svg class="i16"><use href="#micoff"/></svg></p></div>
  <div class="tile t3"><span class="face f7">UO</span><p><span>Ugochukwu Okorie</span></p></div>
  <div class="tile t4"><span class="face f8">AO</span><p><span>Ayomide Omole [CO...</span><svg class="i16"><use href="#micoff"/></svg></p></div>
</section>

<footer class="taskbar">
  <div class="weather"><svg class="i24"><use href="#weather"/></svg><div>30°C<br><span>Partly sunny</span></div></div>
  <nav class="dock">
    <button aria-label="Start"><svg><use href="#win"/></svg></button>
    <button class="run" aria-label="Files"><svg><use href="#files"/></svg></button>
    <button class="run cur" aria-label="Firefox"><svg><use href="#firefox"/></svg></button>
    <button aria-label="Store"><svg><use href="#store"/></svg></button>
    <button class="run" aria-label="Thunderbird"><svg><use href="#tbird"/></svg></button>
    <button class="run" aria-label="Code"><svg><use href="#vscode"/></svg></button>
    <button class="run" aria-label="Terminal"><svg><use href="#term"/></svg></button>
    <button class="run" aria-label="Obsidian"><svg><use href="#obsid"/></svg></button>
    <button class="run hot" aria-label="Telegram"><svg><use href="#tgram"/></svg><em>.97</em></button>
    <button class="run" aria-label="Notepad"><svg><use href="#notes"/></svg></button>
    <button class="run" aria-label="Edge"><svg><use href="#edge"/></svg></button>
    <button class="run" aria-label="Visual Studio"><svg><use href="#vs"/></svg></button>
  </nav>
  <div class="systray">
    <svg class="i12"><use href="#chevup"/></svg>
    <svg class="i16 teal"><use href="#mic"/></svg>
    <div class="net"><svg class="i16"><use href="#wifi"/></svg><svg class="i16"><use href="#vol"/></svg><svg class="i16"><use href="#batt"/></svg></div>
    <time>11:52:05<br>19/05/2023</time>
    <span class="count">11</span>
  </div>
</footer>
</body>
</html>
```
FILE: styles.css
```css
* { box-sizing: border-box; }
html, body { height: 100%; }
body {
  margin: 0; display: flex; flex-direction: column; overflow: hidden;
  background: #000; color: #fbfbfe;
  font: 12px/16px "Noto Sans", "Open Sans", sans-serif;
}
button { border: 0; padding: 0; margin: 0; background: none; color: inherit; font: inherit; display: flex; align-items: center; justify-content: center; }
input { border: 0; outline: 0; padding: 0; background: none; color: inherit; font: inherit; min-width: 0; }
p, h1 { margin: 0; font-weight: 400; }
svg { flex: none; display: block; }
.sprite { position: absolute; width: 0; height: 0; }
.i6 { width: 6px; height: 6px; } .i7 { width: 7px; height: 7px; } .i8 { width: 8px; height: 8px; }
.i10 { width: 10px; height: 10px; } .i11 { width: 11px; height: 11px; } .i12 { width: 12px; height: 12px; }
.i14 { width: 14px; height: 14px; } .i15 { width: 15px; height: 15px; } .i16 { width: 16px; height: 16px; }
.i20 { width: 20px; height: 20px; } .i24 { width: 24px; height: 24px; }
.faded { opacity: .4; }

/* browser tabs */
.tabstrip { flex: none; height: 44px; display: flex; align-items: center; background: #1c1b22; }
.pinned { width: 43px; height: 44px; border-right: 1px solid #5b5a63; padding-right: 2px; }
.tabs { flex: 0 1 1064px; display: grid; grid-auto-flow: column; grid-auto-columns: minmax(0, 1fr); gap: 4px; padding-left: 3px; min-width: 0; }
.tab { min-width: 0; height: 36px; padding: 0 0 0 9px; gap: 7px; justify-content: flex-start; border-radius: 4px; position: relative; font-size: 11px; }
.tab span { flex: 1; overflow: hidden; white-space: nowrap; text-align: left; -webkit-mask-image: linear-gradient(90deg, #000 24px, transparent 44px); mask-image: linear-gradient(90deg, #000 24px, transparent 44px); }
.tab.active { background: #42414d; padding-right: 11px; gap: 5px; }
.tab .two { line-height: 13px; -webkit-mask-image: linear-gradient(90deg, #000 10px, transparent 32px); mask-image: linear-gradient(90deg, #000 10px, transparent 32px); }
.tab small { display: block; font-size: 8px; line-height: 12px; }
.playing { position: absolute; left: 16px; top: 7px; width: 11px; height: 11px; }
.tool { width: 40px; height: 44px; }
.wincontrols { margin-left: auto; display: flex; }
.wincontrols button { width: 46px; height: 44px; }

.navbar { flex: none; height: 41px; display: flex; align-items: center; background: #2b2a33; border-bottom: 1px solid #0c0c0d; }
.navleft { width: 205px; display: flex; padding-left: 6px; }
.navleft button { width: 36px; height: 36px; }
.dim { color: #77767e; }
.urlbar { flex: 1 1 740px; max-width: 740px; height: 32px; display: flex; align-items: center; gap: 12px; padding: 0 8px; background: #1c1b22; border-radius: 4px; }
.urlbar .red { color: #d7261e; margin: 0 -2px 0 -6px; }
.url { flex: 1; font-size: 13px; height: 24px; color: transparent; background: linear-gradient(90deg, #9a99a1 84px, #fbfbfe 84px 173px, #9a99a1 173px); -webkit-background-clip: text; background-clip: text; -webkit-mask-image: linear-gradient(90deg, #000 95%, transparent); mask-image: linear-gradient(90deg, #000 95%, transparent); }
.extensions { margin-left: auto; display: flex; padding-right: 6px; }
.extensions button { width: 36px; height: 36px; position: relative; }
.account { width: 16px; height: 16px; border-radius: 50%; background: #fbfbfe; color: #2b2a33; font-size: 11px; font-weight: 700; line-height: 16px; }
.badge { position: absolute; right: 6px; top: 5px; min-width: 14px; padding: 0 2px; background: #66656c; color: #fff; font-size: 10px; font-weight: 600; line-height: 11px; border-radius: 2px; }
.violet { background: #6a35c9; }

/* stage */
.stage { flex: 1; min-height: 0; display: flex; justify-content: center; background: #000; position: relative; }
.presenter { position: absolute; left: 24px; bottom: 12px; padding: 5px 8px; font-size: 11px; color: #fff; }
.screen { height: 100%; aspect-ratio: 16 / 9; display: flex; flex-direction: column; overflow: hidden; background: #0b090b; color: #e4e2e4; font-size: 7px; line-height: 10px; }
.titlebar { flex: none; height: 34px; display: flex; align-items: center; gap: 6px; padding: 0 11px 0 10px; }
.titlebar > .i10 { margin-right: 4px; }
.titlebar > .i6 { margin: 0 4px; }
.wintitle { white-space: nowrap; width: 368px; }
.winsearch { width: 260px; height: 20px; display: flex; align-items: center; gap: 8px; padding: 0 13px; background: #222122; color: #a8a6a8; font-size: 8px; }
.winsearch input { flex: 1; }
input::placeholder { color: inherit; opacity: 1; }
.winbtns { margin-left: auto; display: flex; align-items: center; gap: 23px; }
.menus { flex: none; height: 18px; display: flex; gap: 11px; padding-left: 14px; font-size: 8px; }
.menus a { color: inherit; text-decoration: none; height: 15px; line-height: 17px; }
.menus .on { font-weight: 600; border-bottom: 2px solid #62a8f0; margin-left: 5px; }

/* ribbon */
.ribbon { flex: none; height: 62px; margin: 0 4px 0 6px; display: flex; padding: 3px 0 1px; background: #2a292b; border-radius: 5px; border-bottom: 1px solid #3a3839; }
.group { display: flex; flex-direction: column; border-right: 1px solid #58565a; }
.group > p { text-align: center; line-height: 10px; position: relative; }
.launch { position: absolute; right: 1px; top: 3px; width: 5px; height: 5px; }
.body { flex: 1; display: flex; }
.g-delete { width: 109px; padding-left: 8px; } .g-respond { width: 142px; padding-left: 4px; }
.g-quick { width: 173px; padding-left: 6px; } .g-move { width: 116px; padding-left: 4px; }
.g-tags { width: 103px; padding-left: 4px; } .g-edit { width: 63px; padding-left: 5px; }
.g-immer { width: 74px; padding-left: 4px; } .g-lang { width: 42px; padding-left: 1px; } .g-zoom { width: 36px; padding-left: 4px; }
.big { flex-direction: column; justify-content: flex-start; width: 28px; line-height: 10px; white-space: nowrap; }
.big .i20 { margin-bottom: 2px; }
.big span { display: flex; align-items: center; }
.mid { width: 38px; }
.caret { width: 5px; height: 5px; margin: 2px; }
.small { display: flex; flex-direction: column; gap: 5px; padding: 1px 0 0 3px; }
.small button { height: 11px; gap: 2px; white-space: nowrap; justify-content: flex-start; }
.small.wide { width: 41px; padding: 6px 0 0; gap: 9px; }
.small .caret { margin: 0 1px; }
.quick { margin: 3px 6px 6px 0; height: 40px; border: 1px solid #4a484b; display: flex; }
.steps { flex: 1; display: grid; grid-template-columns: 1fr 1fr; grid-template-rows: repeat(3, 12px); padding: 1px 0 0 1px; }
.steps button { justify-content: flex-start; gap: 2px; white-space: nowrap; }
.spin { width: 9px; border-left: 1px solid #4a484b; display: flex; flex-direction: column; justify-content: space-around; align-items: center; }
.collapse { margin-left: auto; align-self: flex-end; padding: 3px 7px; }

/* message */
.mail { flex: 1; min-height: 0; margin: 3px 4px 1px 6px; display: flex; flex-direction: column; background: #262426; border: 1px solid #4a484a; border-radius: 6px 6px 0 0; }
.mailhead { height: 86px; flex: none; padding: 13px 17px 0 13px; }
.mailhead h1 { font: 11px/16px "Open Sans", sans-serif; }
.meta { display: flex; }
.sender { width: 30px; height: 30px; margin: 8px 6px 0 0; border-radius: 50%; background: #c84cb4; display: grid; place-items: center; font: 9px "Open Sans", sans-serif; position: relative; }
.sender::after { content: ""; position: absolute; right: 0; bottom: 0; width: 8px; height: 8px; border-radius: 50%; background: #fff; }
.people { padding-top: 12px; white-space: nowrap; }
.people p { line-height: 11px; height: 11px; }
.people .from { font-size: 9px; height: 12px; }
.people b { display: inline-block; width: 12px; font-weight: 400; }
.people i { display: inline-block; width: 6px; height: 6px; border-radius: 50%; background: #fff; margin: 0 3px; }
.respond { margin-left: auto; text-align: right; padding-top: 2px; }
.btns { display: flex; gap: 5px; height: 20px; margin-bottom: 3px; }
.sq { width: 20px; border: 1px solid #5a585a; border-radius: 3px; background: #343234; }
.trio { display: flex; border: 1px solid #5a585a; border-radius: 3px; background: #343234; }
.trio button { padding: 0 7px; gap: 4px; border-left: 1px solid #4a484a; }
.trio button:first-child { border-left: 0; }

.mailbody { flex: 1; min-height: 0; display: flex; }
.sheet { flex: 1; min-width: 0; padding-left: 8px; overflow: hidden; position: relative; }
.ibeam { position: absolute; left: 140px; top: 15px; font: 12px/12px "Liberation Serif", serif; }
table { margin-top: -9px; width: 100%; table-layout: fixed; border-collapse: collapse; font: 8px/12px Lato, sans-serif; color: #eeecee; }
.c-no { width: 40px; } .c-task { width: 234px; } .c-days { width: 48px; } .c-start { width: 65px; } .c-end { width: 71px; }
.c-team { width: 165px; } .c-plan { width: 50px; } .c-done { width: 57px; } .c-status { width: 88px; }
tr { height: 13px; }
.tall { height: 26px; }
td { padding: 0 5px; border: 1px solid #a5a2a5; white-space: nowrap; overflow: hidden; vertical-align: middle; background: #262426; }
td:nth-child(2), td:nth-child(6), td:nth-child(10) { font-family: "Open Sans", sans-serif; }
td:nth-child(10) { padding-right: 0; }
td:nth-child(1), td:nth-child(7), td:nth-child(8), td:nth-child(9) { text-align: center; }
td:nth-child(2) { text-indent: 12px; }
td:nth-child(4), td:nth-child(7), td:nth-child(9) { font-weight: 700; }
td:nth-child(n+7) { background: #ff9186; color: #fff0ea; border-color: #ffd5b4; }
td:nth-child(8), td:nth-child(10) { color: #ffe2da; }
.ok td:nth-child(n+7) { background: #008c3a; color: #fff; border-color: #bfe6b0; }
.head td:nth-child(2) { text-indent: 6px; }
.head td:nth-child(3), .head td:nth-child(8) { font-weight: 700; }
.head td:nth-child(2), .head td:nth-child(6) { font-weight: 600; }
.low td:nth-child(6) { vertical-align: bottom; }

.vscroll { width: 14px; display: flex; flex-direction: column; align-items: center; justify-content: space-between; background: #161416; padding: 1px 4px 1px 0; }
.vscroll span { width: 5px; height: 11px; border-radius: 2px; background: #b5b2b5; margin: 3px 0 auto; }
.flip { transform: rotate(180deg); } .left { transform: rotate(-90deg); } .right { transform: rotate(90deg); }
.hscroll { flex: none; height: 11px; display: flex; align-items: center; background: #161416; padding: 0 3px 0 4px; }
.hscroll span { width: 658px; height: 6px; border-radius: 3px; background: #8b878b; margin: 0 auto 0 1px; }
.hscroll b { width: 11px; height: 11px; background: #fff; }

.innerbar { flex: none; height: 26px; display: flex; align-items: center; background: #1c181b; border-top: 1px solid #2e2a2d; padding: 0 11px 0 12px; }
.wx { display: flex; align-items: center; gap: 4px; width: 171px; }
.start { margin-right: 9px; }
.pill { width: 138px; height: 20px; border-radius: 10px; background: #2f2b2e; display: flex; align-items: center; gap: 5px; padding: 0 1px 0 8px; font-size: 8px; }
.pill input { flex: 1; }
.walrus { width: 32px; height: 18px; }
.apps { flex: 0 1 441px; display: flex; align-self: stretch; }
.apps span { flex: 1; display: grid; place-items: center; position: relative; }
.apps svg { width: 15px; height: 15px; }
.apps .run::after { content: ""; position: absolute; bottom: 0; left: calc(50% - 2px); width: 4px; height: 1px; background: #aaa; }
.apps .hot { background: #4a2524; }
.apps .cur { background: #262a33; }
.apps .cur::after { background: #f58a5e; width: 10px; left: calc(50% - 5px); }
.apps em { position: absolute; right: 2px; top: 1px; width: 9px; height: 9px; border-radius: 50%; background: #d03030; font: 700 7px/9px "Open Sans", sans-serif; text-align: center; color: #fff; }
.tray { margin-left: auto; display: flex; align-items: center; gap: 3px; align-self: stretch; }
.micbox { width: 20px; align-self: stretch; background: #fb8a62; color: #111; display: grid; place-items: center; margin: 0 2px; }
.tray > .i10 { margin-right: 2px; }
.tray time { text-align: right; width: 41px; margin-right: 4px; white-space: nowrap; }

.callbar { position: absolute; left: 406px; bottom: 36px; height: 52px; display: flex; border-radius: 4px; overflow: hidden; color: #fff; box-shadow: 0 2px 8px rgba(0,0,0,.5); }
.callbar svg { width: 24px; height: 24px; }
.callbar button { width: 52px; height: 52px; position: relative; }
.timer { width: 69px; border-right: 1px solid #222; background: rgba(56,55,56,.93); color: #c8c6c8; font-size: 14px; line-height: 52px; text-align: center; }
.part { display: flex; }
.light { background: rgba(56,55,56,.93); }
.dark { background: rgba(36,35,36,.93); }
.dot { position: absolute; right: 13px; top: 13px; width: 9px; height: 9px; border-radius: 50%; background: #e97548; }
.hang { background: #9c2e42; }

/* roster */
.roster { flex: none; height: 94px; display: flex; background: #1b1a1b; }
.others { flex: 1; display: flex; justify-content: flex-end; gap: 42px; padding: 26px 21px 0 0; }
.face { flex: none; width: 42px; height: 42px; border-radius: 50%; display: grid; place-items: center; font-size: 17px; font-weight: 600; }
.tile { flex: 0 1 180px; display: flex; flex-direction: column; align-items: center; padding-top: 25px; }
.tile .face { width: 44px; height: 44px; }
.tile p { align-self: stretch; display: flex; justify-content: space-between; align-items: center; padding: 0 21px 0 15px; margin-top: 10px; height: 15px; font-size: 11px; color: #fff; }
.t1 { background: #3b3b3b; } .t2 { background: #363636; } .t4 { background: #2f2f2f; }
.t3 { background: radial-gradient(circle at 50% 50%, #5a588c 0, #45435f 45%, #3b3949 85%); }
.f1 { background: #dde4da; color: #34502a; } .f2 { background: #f4d3de; color: #75133c; }
.f3 { background: #e2deee; color: #3c366b; } .f4 { background: #e5eedb; color: #466030; }
.f5 { background: #d9f0f4; color: #246066; } .f6 { background: #ebd3e2; color: #5c1743; }
.f7 { background: #d2e3d8; color: #12401f; box-shadow: 0 0 0 2px #3b3949, 0 0 0 5px #9a9cf8; } .f8 { background: #d3eee0; color: #17603a; }

/* desktop taskbar */
.taskbar { flex: none; height: 48px; display: flex; align-items: center; border-top: 1px solid #3c4152; background: linear-gradient(90deg, #132348, #10204f 30%, #121b52 45%, #1a1c38 55%, #141a4c 62%, #1a202c 71%, #1b2129); color: #fff; }
.weather { width: 421px; display: flex; align-items: center; gap: 7px; padding-left: 19px; font-size: 11px; line-height: 16px; }
.weather span { color: #c4cad8; }
.dock { display: flex; gap: 4px; }
.dock button { width: 40px; height: 40px; border-radius: 4px; position: relative; }
.dock svg { width: 24px; height: 24px; }
.dock .run::after { content: ""; position: absolute; bottom: 1px; left: calc(50% - 3px); width: 6px; height: 3px; border-radius: 2px; background: #8f98ad; }
.dock .cur { background: rgba(255,255,255,.1); }
.dock .cur::after { width: 16px; left: calc(50% - 8px); background: #4cc2ff; }
.dock .hot { background: #4c2a30; }
.dock .hot::after { background: #ff8f92; }
.dock em { position: absolute; right: 2px; top: 7px; padding: 0 2px; border-radius: 2px; background: #f23c34; font: 8px/11px "Open Sans", sans-serif; color: #fff; }
.systray { margin-left: auto; display: flex; align-items: center; padding-right: 20px; font-size: 11px; }
.teal { color: #4cb8c4; margin: 0 16px 0 18px; }
.net { display: flex; gap: 8px; margin-right: 20px; }
.systray time { text-align: right; }
.count { width: 16px; height: 16px; border-radius: 50%; background: #4cc2ff; color: #12202c; font-size: 9px; text-align: center; margin-left: 7px; }
```
